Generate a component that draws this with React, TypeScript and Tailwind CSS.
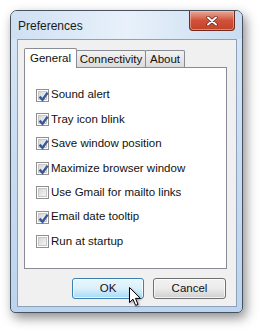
const items = [
  { label: "Sound alert", checked: true },
  { label: "Tray icon blink", checked: true },
  { label: "Save window position", checked: true },
  { label: "Maximize browser window", checked: true },
  { label: "Use Gmail for mailto links", checked: false },
  { label: "Email date tooltip", checked: true },
  { label: "Run at startup", checked: false },
];

const CheckBox = ({ checked }: { checked: boolean }) => (
  <div className="w-[13px] h-[13px] border border-[#8f8f8f] bg-white p-[1px] shrink-0">
    <div className="w-full h-full border border-[#c8c8c8] bg-gradient-to-br from-[#d6d6d6] to-[#f6f6f6] relative">
      {checked && (
        <svg viewBox="0 0 9 9" className="absolute -inset-[1px] w-[11px] h-[11px]">
          <path d="M1.3 4.6 L3.7 7.2 L7.9 1.3" stroke="#3a5898" strokeWidth="2" fill="none" />
        </svg>
      )}
    </div>
  </div>
);

const Cursor = () => (
  <svg width="14" height="21" viewBox="0 0 14 21" className="absolute left-[129px] top-[287px] drop-shadow-[1px_1px_1px_rgba(0,0,0,0.35)]">
    <path d="M0.5 0.5 L0.5 15.5 L4 12.2 L6.6 18.4 L9 17.4 L6.5 11.4 L11.3 11.4 Z" fill="white" stroke="black" strokeWidth="1" strokeLinejoin="round" />
  </svg>
);

export default function App() {
  return (
    <div
      className="relative w-[261px] h-[332px] bg-white overflow-hidden text-[11.5px] text-[#111]"
      style={{ fontFamily: '"Liberation Sans", Arial, sans-serif' }}
    >
      <div className="ml-[10px] mt-[10px] w-[233px] h-[303px] flex flex-col border border-[#46525f] rounded-t-[7px] rounded-b-[5px] bg-gradient-to-b from-[#d9e7f5] via-[#c8dcf1] to-[#bcd4ee] shadow-[3px_5px_12px_rgba(0,0,0,0.45)]">
        <div className="h-[28px] flex items-start justify-between rounded-t-[6px] bg-gradient-to-r from-[#cfe0f3] via-[#e8f1fa] to-[#c9dcf0]">
          <span className="ml-[7px] mt-[8px] leading-[14px] text-[12px] text-[#1a1a1a]">Preferences</span>
          <div className="mr-[7px] w-[46px] h-[20px] border border-[#6e2a1f] border-t-0 rounded-b-[4px] bg-gradient-to-b from-[#e9a898] via-[#d0513a] to-[#c44126] flex items-center justify-center shadow-[inset_0_0_0_1px_rgba(255,200,190,0.5)]">
            <svg width="12" height="10" viewBox="0 0 12 10">
              <path d="M2 1.5 L10 8.5 M10 1.5 L2 8.5" stroke="#5a1a10" strokeWidth="3.2" strokeLinecap="round" />
              <path d="M2 1.5 L10 8.5 M10 1.5 L2 8.5" stroke="white" strokeWidth="2" strokeLinecap="round" />
            </svg>
          </div>
        </div>
        <div className="ml-[6px] mr-[5px] mb-[5px] flex-1 border border-[#8da2ba] bg-[#f0f0f0] flex flex-col">
          <div className="ml-[6px] mt-[8px] w-[203px] flex flex-col">
            <div className="flex items-end h-[20px]">
              <div className="relative z-10 w-[53px] h-[20px] bg-white border border-[#898c95] border-b-0 rounded-t-[2px] flex items-center justify-center">
                General
              </div>
              <div className="w-[70px] h-[18px] -ml-[1px] bg-gradient-to-b from-[#f3f3f3] to-[#d9d9d9] border border-[#898c95] border-b-0 rounded-t-[2px] flex items-center justify-center leading-none">
                Connectivity
              </div>
              <div className="w-[40px] h-[18px] -ml-[1px] bg-gradient-to-b from-[#f3f3f3] to-[#d9d9d9] border border-[#898c95] border-b-0 rounded-t-[2px] flex items-center justify-center leading-none">
                About
              </div>
            </div>
            <div className="-mt-[1px] h-[202px] bg-white border border-[#898c95] pt-[15px] pl-[11px]">
              {items.map((it) => (
                <div key={it.label} className="h-[24.4px] flex items-center gap-[2px]">
                  <CheckBox checked={it.checked} />
                  <span className="leading-none whitespace-nowrap">{it.label}</span>
                </div>
              ))}
            </div>
          </div>
          <div className="flex justify-end gap-[9px] mt-[9px] mr-[10px]">
            <button className="w-[72px] h-[21px] rounded-[3px] border border-[#3c7fb1] bg-gradient-to-b from-[#eaf6fd] via-[#d9f0fc] to-[#a7d9f5] flex items-center justify-center shadow-[inset_0_0_0_1px_rgba(255,255,255,0.7)]">
              OK
            </button>
            <button className="w-[73px] h-[21px] rounded-[3px] border border-[#707070] bg-gradient-to-b from-[#f2f2f2] via-[#ebebeb] to-[#cfcfcf] flex items-center justify-center shadow-[inset_0_0_0_1px_rgba(255,255,255,0.7)]">
              Cancel
            </button>
          </div>
        </div>
      </div>
      <Cursor />
    </div>
  );
}
